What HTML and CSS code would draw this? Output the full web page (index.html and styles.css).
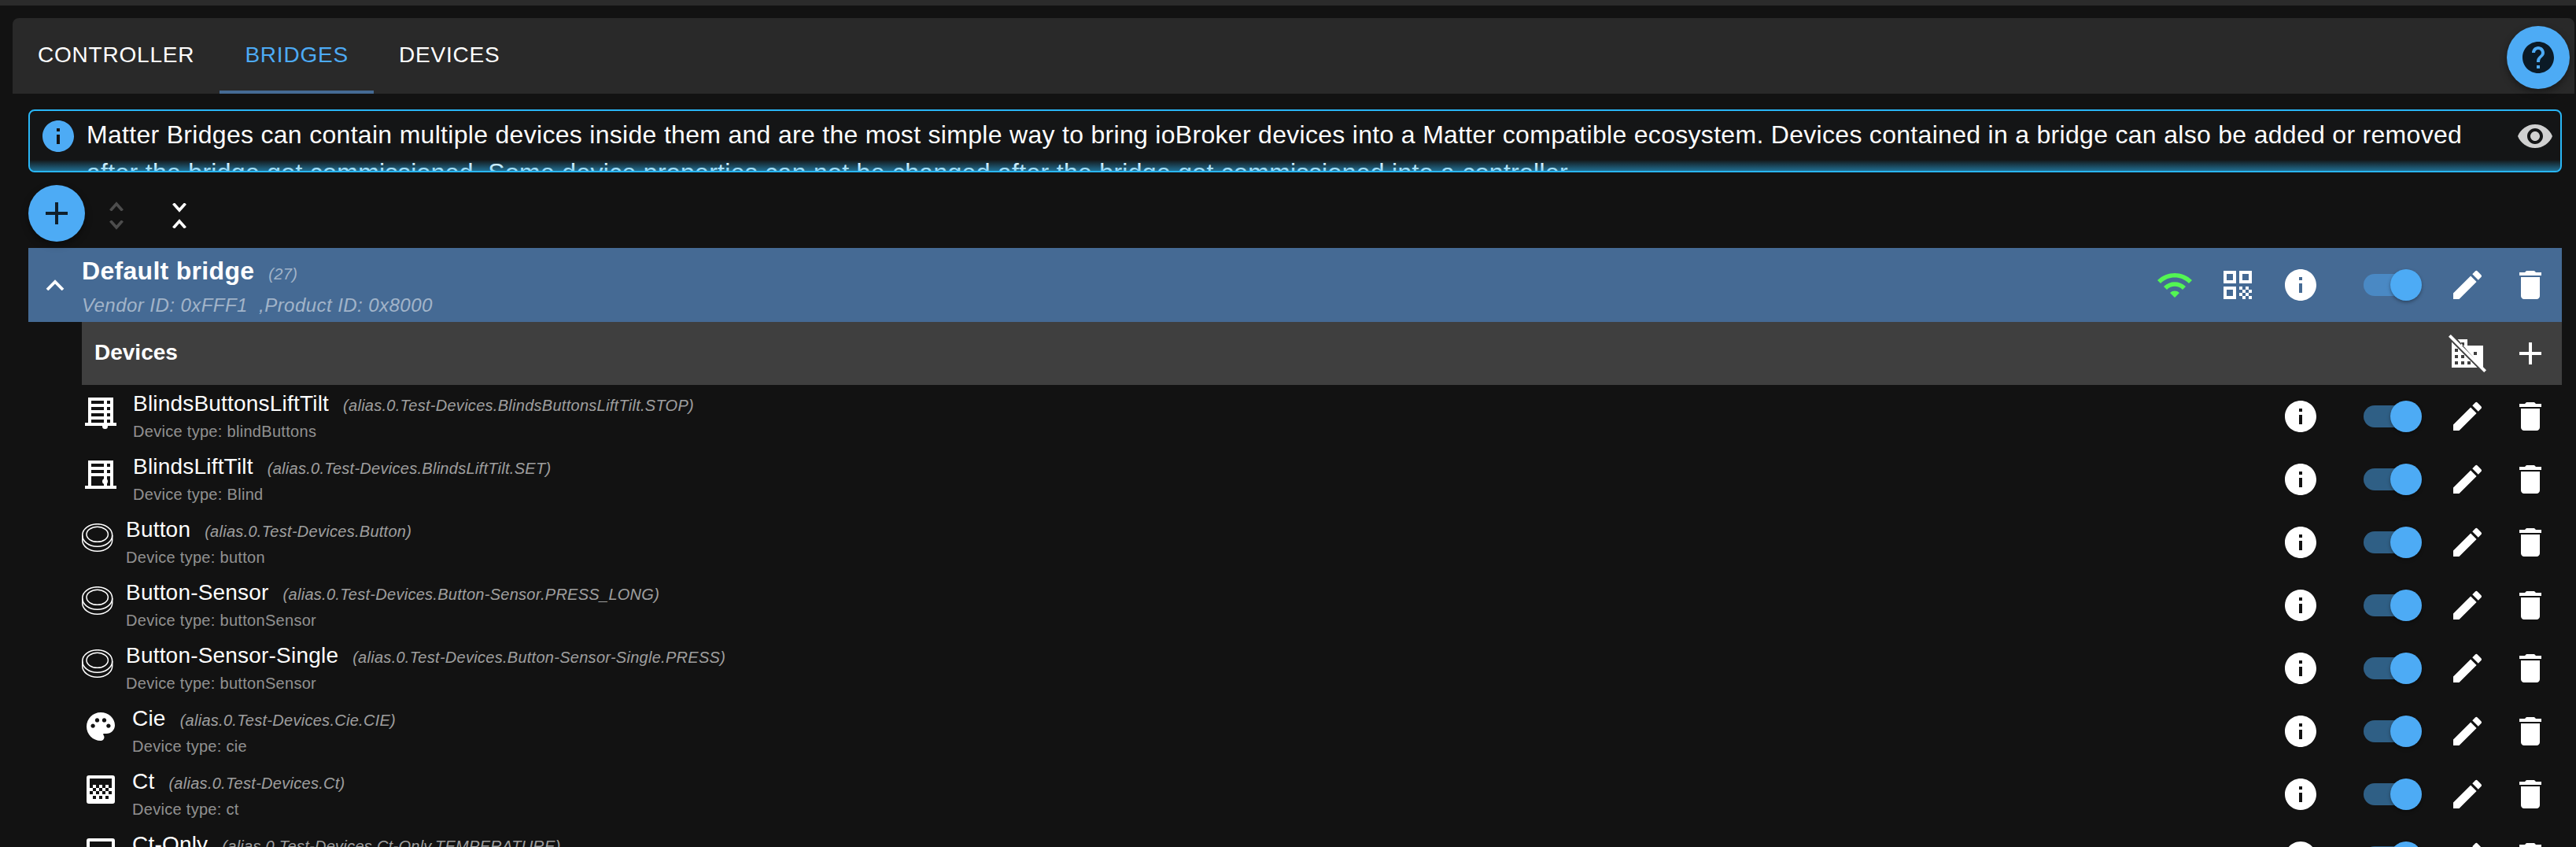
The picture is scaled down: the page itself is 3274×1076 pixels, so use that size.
FILE: index.html
```html
<!DOCTYPE html>
<html lang="en">
<head>
    <meta charset="UTF-8">
    <title>Matter bridges</title>
    <link rel="stylesheet" href="styles.css">
</head>
<body>
    <svg class="sprite" xmlns="http://www.w3.org/2000/svg">
        <symbol id="i-info" viewBox="0 0 24 24"><path d="M12 2C6.48 2 2 6.48 2 12s4.48 10 10 10 10-4.48 10-10S17.52 2 12 2zm1 15h-2v-6h2v6zm0-8h-2V7h2v2z"/></symbol>
        <symbol id="i-edit" viewBox="0 0 24 24"><path d="M3 17.25V21h3.75L17.81 9.94l-3.75-3.75L3 17.25zM20.71 7.04c.39-.39.39-1.02 0-1.41l-2.34-2.34a.9959.9959 0 0 0-1.41 0l-1.83 1.83 3.75 3.75 1.83-1.83z"/></symbol>
        <symbol id="i-delete" viewBox="0 0 24 24"><path d="M6 19c0 1.1.9 2 2 2h8c1.1 0 2-.9 2-2V7H6v12zM19 4h-3.5l-1-1h-5l-1 1H5v2h14V4z"/></symbol>
        <symbol id="i-add" viewBox="0 0 24 24"><path d="M19 13h-6v6h-2v-6H5v-2h6V5h2v6h6v2z"/></symbol>
        <symbol id="i-wifi" viewBox="0 0 24 24"><path d="M1 9l2 2c4.97-4.97 13.03-4.97 18 0l2-2C16.93 2.93 7.08 2.93 1 9zm8 8l3 3 3-3c-1.65-1.66-4.34-1.66-6 0zm-4-4l2 2c2.76-2.76 7.24-2.76 10 0l2-2C15.14 9.14 8.87 9.14 5 13z"/></symbol>
        <symbol id="i-qr" viewBox="0 0 24 24"><path d="M3 11h8V3H3v8zm2-6h4v4H5V5zM3 21h8v-8H3v8zm2-6h4v4H5v-4zM13 3v8h8V3h-8zm6 6h-4V5h4v4zM21 19h-2v2h2v-2zM15 13h-2v2h2v-2zM17 15h-2v2h2v-2zM15 17h-2v2h2v-2zM17 19h-2v2h2v-2zM19 17h-2v2h2v-2zM19 13h-2v2h2v-2zM21 15h-2v2h2v-2z"/></symbol>
        <symbol id="i-eye" viewBox="0 0 24 24"><path d="M12 4.5C7 4.5 2.73 7.61 1 12c1.73 4.39 6 7.5 11 7.5s9.27-3.11 11-7.5c-1.73-4.39-6-7.5-11-7.5zM12 17c-2.76 0-5-2.24-5-5s2.24-5 5-5 5 2.24 5 5-2.24 5-5 5zm0-8c-1.66 0-3 1.34-3 3s1.34 3 3 3 3-1.34 3-3-1.34-3-3-3z"/></symbol>
        <symbol id="i-help" viewBox="0 0 24 24"><path d="M12 2C6.48 2 2 6.48 2 12s4.48 10 10 10 10-4.48 10-10S17.52 2 12 2zm1 17h-2v-2h2v2zm2.07-7.75-.9.92C13.45 12.9 13 13.5 13 15h-2v-.5c0-1.1.45-2.1 1.17-2.83l1.24-1.26c.37-.36.59-.86.59-1.41 0-1.1-.9-2-2-2s-2 .9-2 2H8c0-2.21 1.79-4 4-4s4 1.79 4 4c0 .88-.36 1.68-.93 2.25z"/></symbol>
        <symbol id="i-no-domain" viewBox="0 0 24 24"><path d="M1.400 0 24 22.600 22.600 24 0 1.400z"/><path fill-rule="evenodd" d="M2 4.700V21h16.300zM4 9h2v2H4zm0 4h2v2H4zm0 4h2v2H4zm4-4h2v2H8zm0 4h2v2H8zm4 0h2v2h-2z"/><path fill-rule="evenodd" d="M5.800 3H12v4h10v14.700zM8 5v2h2V5zm8 6v2h2v-2z"/></symbol>
        <symbol id="i-palette" viewBox="2 2 20 20"><path d="M12 2C6.49 2 2 6.49 2 12s4.49 10 10 10c1.38 0 2.5-1.12 2.5-2.5 0-.61-.23-1.2-.64-1.67-.08-.1-.13-.21-.13-.33 0-.28.22-.5.5-.5H16c3.31 0 6-2.69 6-6 0-4.96-4.49-9-10-9zm5.5 11c-.83 0-1.5-.67-1.5-1.5s.67-1.5 1.5-1.5 1.5.67 1.5 1.5-.67 1.5-1.5 1.5zm-3-4c-.83 0-1.5-.67-1.5-1.5S13.67 6 14.5 6s1.5.67 1.5 1.5S15.33 9 14.5 9zM5 11.5c0-.83.67-1.5 1.5-1.5s1.5.67 1.5 1.5S7.33 13 6.5 13 5 12.33 5 11.5zm6-4c0 .83-.67 1.5-1.5 1.5S8 8.33 8 7.5 8.67 6 9.5 6s1.5.67 1.5 1.5z"/></symbol>
        <symbol id="i-blind-full" viewBox="0 0 40 40"><path fill-rule="evenodd" d="M4 0h32v32h4v4H0v-4h4zM8 4v4h16V4zm20 0v4h4V4zM8 12v4h16v-4zm20 0v4h4v-4zM8 20v4h16v-4zm20 0v4h4v-4zM8 28v4h16v-4zm20 0v4h4v-4z"/><circle cx="25.500" cy="36.500" r="3.500"/></symbol>
        <symbol id="i-blind-half" viewBox="0 0 40 40"><path fill-rule="evenodd" d="M4 0h32v32h4v4H0v-4h4zM8 4v4h16V4zm20 0v4h4V4zM8 12v4h16v-4zm20 0v4h4v-4zM8 20v12h16V20zm20 0v12h4V20z"/><circle cx="25.500" cy="26.500" r="3.500"/></symbol>
        <symbol id="i-button" viewBox="0 0 40 36"><g fill="none" stroke="#fff" stroke-width="1.500"><ellipse cx="19.700" cy="15" rx="19" ry="14.300"/><ellipse cx="19.700" cy="13.800" rx="13.700" ry="9.500"/><path d="M.7 15v6c0 8 8.500 14.200 19 14.200s19-6.200 19-14.200v-6"/></g></symbol>
        <symbol id="i-ct" viewBox="0 0 36 36"><path fill-rule="evenodd" d="M3 0h30a3 3 0 0 1 3 3v30a3 3 0 0 1-3 3H3a3 3 0 0 1-3-3V3a3 3 0 0 1 3-3zm1 4v8h28V4zm0 8v4h4v-4zm8 0v4h4v-4zm8 0v4h4v-4zm8 0v4h4v-4zM8 16v4h4v-4zm8 0v4h4v-4zm8 0v4h4v-4zM4 20v4h4v-4zm8 0v4h4v-4zm8 0v4h4v-4zm8 0v4h4v-4zM8 26v4h4v-4zm8 0v4h4v-4zm8 0v4h4v-4z"/></symbol>
        <symbol id="i-ct-only" viewBox="0 0 36 36"><path fill-rule="evenodd" d="M3 0h30a3 3 0 0 1 3 3v30a3 3 0 0 1-3 3H3a3 3 0 0 1-3-3V3a3 3 0 0 1 3-3zm1 4v28h28V4z"/></symbol>
    </svg>

    <div class="top-strip"></div>

    <div class="tabs">
        <div class="tab">CONTROLLER</div>
        <div class="tab tab-active">BRIDGES</div>
        <div class="tab">DEVICES</div>
    </div>

    <div class="help-fab"><svg class="icon"><use href="#i-help"/></svg></div>

    <div class="alert">
        <svg class="icon alert-icon"><use href="#i-info"/></svg>
        <div class="alert-text">Matter Bridges can contain multiple devices inside them and are the most simple way to bring ioBroker devices into a Matter compatible ecosystem. Devices contained in a bridge can also be added or removed after the bridge got commissioned. Some device properties can not be changed after the bridge got commissioned into a controller</div>
        <svg class="icon alert-eye"><use href="#i-eye"/></svg>
    </div>

    <div class="toolbar">
        <div class="add-fab"><svg class="icon"><use href="#i-add"/></svg></div>
        <div class="fold-btn fold-disabled">
            <svg class="chev" viewBox="0 0 18 12"><path d="M1.400 11.500 9 3l7.600 8.500"/></svg>
            <svg class="chev" viewBox="0 0 18 12"><path d="M1.400.5 9 9l7.600-8.500"/></svg>
        </div>
        <div class="fold-btn fold-close">
            <svg class="chev" viewBox="0 0 18 12"><path d="M1.400.5 9 9l7.600-8.500"/></svg>
            <svg class="chev" viewBox="0 0 18 12"><path d="M1.400 11.500 9 3l7.600 8.500"/></svg>
        </div>
    </div>

    <div class="bridge">
        <svg class="bridge-chev" viewBox="0 0 24 14"><path d="M2 13 12 3l10 10"/></svg>
        <div class="bridge-info">
            <div class="bridge-title">Default bridge<span class="bridge-count">(27)</span></div>
            <div class="bridge-sub">Vendor ID: 0xFFF1 &nbsp;,Product ID: 0x8000</div>
        </div>
        <div class="actions">
            <svg class="icon icon-wifi"><use href="#i-wifi"/></svg>
            <svg class="icon"><use href="#i-qr"/></svg>
            <svg class="icon"><use href="#i-info"/></svg>
            <div class="switch switch-bridge"></div>
            <svg class="icon"><use href="#i-edit"/></svg>
            <svg class="icon"><use href="#i-delete"/></svg>
        </div>
    </div>

    <div class="devices">
        <div class="devices-head">
            <div class="devices-title">Devices</div>
            <svg class="icon head-icon"><use href="#i-no-domain"/></svg>
            <svg class="icon head-icon"><use href="#i-add"/></svg>
        </div>

        <div class="row">
            <div class="dev-icon dev-wide"><svg class="blind"><use href="#i-blind-full"/></svg></div>
            <div class="dev-text">
                <div class="dev-name">BlindsButtonsLiftTilt<span class="dev-alias">(alias.0.Test-Devices.BlindsButtonsLiftTilt.STOP)</span></div>
                <div class="dev-type">Device type: blindButtons</div>
            </div>
            <div class="actions">
                <svg class="icon"><use href="#i-info"/></svg>
                <div class="switch"></div>
                <svg class="icon"><use href="#i-edit"/></svg>
                <svg class="icon"><use href="#i-delete"/></svg>
            </div>
        </div>

        <div class="row">
            <div class="dev-icon dev-wide"><svg class="blind"><use href="#i-blind-half"/></svg></div>
            <div class="dev-text">
                <div class="dev-name">BlindsLiftTilt<span class="dev-alias">(alias.0.Test-Devices.BlindsLiftTilt.SET)</span></div>
                <div class="dev-type">Device type: Blind</div>
            </div>
            <div class="actions">
                <svg class="icon"><use href="#i-info"/></svg>
                <div class="switch"></div>
                <svg class="icon"><use href="#i-edit"/></svg>
                <svg class="icon"><use href="#i-delete"/></svg>
            </div>
        </div>

        <div class="row">
            <div class="dev-icon dev-narrow"><svg class="btn-icon"><use href="#i-button"/></svg></div>
            <div class="dev-text">
                <div class="dev-name">Button<span class="dev-alias">(alias.0.Test-Devices.Button)</span></div>
                <div class="dev-type">Device type: button</div>
            </div>
            <div class="actions">
                <svg class="icon"><use href="#i-info"/></svg>
                <div class="switch"></div>
                <svg class="icon"><use href="#i-edit"/></svg>
                <svg class="icon"><use href="#i-delete"/></svg>
            </div>
        </div>

        <div class="row">
            <div class="dev-icon dev-narrow"><svg class="btn-icon"><use href="#i-button"/></svg></div>
            <div class="dev-text">
                <div class="dev-name">Button-Sensor<span class="dev-alias">(alias.0.Test-Devices.Button-Sensor.PRESS_LONG)</span></div>
                <div class="dev-type">Device type: buttonSensor</div>
            </div>
            <div class="actions">
                <svg class="icon"><use href="#i-info"/></svg>
                <div class="switch"></div>
                <svg class="icon"><use href="#i-edit"/></svg>
                <svg class="icon"><use href="#i-delete"/></svg>
            </div>
        </div>

        <div class="row">
            <div class="dev-icon dev-narrow"><svg class="btn-icon"><use href="#i-button"/></svg></div>
            <div class="dev-text">
                <div class="dev-name">Button-Sensor-Single<span class="dev-alias">(alias.0.Test-Devices.Button-Sensor-Single.PRESS)</span></div>
                <div class="dev-type">Device type: buttonSensor</div>
            </div>
            <div class="actions">
                <svg class="icon"><use href="#i-info"/></svg>
                <div class="switch"></div>
                <svg class="icon"><use href="#i-edit"/></svg>
                <svg class="icon"><use href="#i-delete"/></svg>
            </div>
        </div>

        <div class="row">
            <div class="dev-icon dev-mid"><svg class="square"><use href="#i-palette"/></svg></div>
            <div class="dev-text">
                <div class="dev-name">Cie<span class="dev-alias">(alias.0.Test-Devices.Cie.CIE)</span></div>
                <div class="dev-type">Device type: cie</div>
            </div>
            <div class="actions">
                <svg class="icon"><use href="#i-info"/></svg>
                <div class="switch"></div>
                <svg class="icon"><use href="#i-edit"/></svg>
                <svg class="icon"><use href="#i-delete"/></svg>
            </div>
        </div>

        <div class="row">
            <div class="dev-icon dev-mid"><svg class="square"><use href="#i-ct"/></svg></div>
            <div class="dev-text">
                <div class="dev-name">Ct<span class="dev-alias">(alias.0.Test-Devices.Ct)</span></div>
                <div class="dev-type">Device type: ct</div>
            </div>
            <div class="actions">
                <svg class="icon"><use href="#i-info"/></svg>
                <div class="switch"></div>
                <svg class="icon"><use href="#i-edit"/></svg>
                <svg class="icon"><use href="#i-delete"/></svg>
            </div>
        </div>

        <div class="row">
            <div class="dev-icon dev-mid"><svg class="square"><use href="#i-ct-only"/></svg></div>
            <div class="dev-text">
                <div class="dev-name">Ct-Only<span class="dev-alias">(alias.0.Test-Devices.Ct-Only.TEMPERATURE)</span></div>
                <div class="dev-type">Device type: ct</div>
            </div>
            <div class="actions">
                <svg class="icon"><use href="#i-info"/></svg>
                <div class="switch"></div>
                <svg class="icon"><use href="#i-edit"/></svg>
                <svg class="icon"><use href="#i-delete"/></svg>
            </div>
        </div>
    </div>
</body>
</html>
```

FILE: styles.css
```css
html, body {
    height: 1076px;
    overflow: hidden;
}
body {
    position: relative;
    margin: 0;
    background: #121212;
    color: #fff;
    font-family: "Liberation Sans", Arial, sans-serif;
}
.sprite {
    display: none;
}
.icon {
    display: block;
    flex: none;
    width: 48px;
    height: 48px;
    fill: #fff;
}
.top-strip {
    height: 7px;
    background: #2b2b2b;
}

/* tabs */
.tabs {
    display: flex;
    height: 96px;
    margin: 16px 2px 0 16px;
    background: #292929;
    border-radius: 8px 8px 0 0;
}
.tab {
    box-sizing: border-box;
    height: 96px;
    padding: 0 32px;
    font-size: 28px;
    letter-spacing: 0.8px;
    line-height: 94px;
}
.tab-active {
    color: #4dabf5;
    border-bottom: 4px solid #456a94;
}
.help-fab {
    position: absolute;
    top: 33px;
    left: 3186px;
    display: flex;
    align-items: center;
    justify-content: center;
    width: 80px;
    height: 80px;
    border-radius: 50%;
    background: #4dabf5;
    box-shadow: 0 4px 10px rgba(0, 0, 0, 0.4);
}
.help-fab .icon {
    fill: #0b1a26;
}

/* info box */
.alert {
    position: relative;
    box-sizing: border-box;
    display: flex;
    width: 3220px;
    height: 80px;
    margin: 20px 0 0 36px;
    padding: 0 8px 0 12px;
    border: 2px solid #29b6f6;
    border-radius: 8px;
    background: #141516;
    overflow: hidden;
}
.alert::after {
    content: "";
    position: absolute;
    left: 0;
    right: 0;
    bottom: 0;
    height: 14px;
    background: linear-gradient(rgba(41, 182, 246, 0), rgba(41, 182, 246, 0.55));
}
.alert-icon {
    margin-top: 8px;
    fill: #4dabf5;
}
.alert-text {
    flex: 1;
    margin-left: 12px;
    padding-top: 6px;
    padding-right: 28px;
    font-size: 32px;
    letter-spacing: 0.3px;
    line-height: 48px;
}
.alert-eye {
    margin-top: 8px;
    fill: #d0d0d0;
}

/* add and fold buttons */
.toolbar {
    display: flex;
    align-items: center;
    height: 72px;
    margin: 16px 0 8px 36px;
}
.add-fab {
    display: flex;
    align-items: center;
    justify-content: center;
    width: 72px;
    height: 72px;
    border-radius: 50%;
    background: #4dabf5;
    box-shadow: 0 4px 10px rgba(0, 0, 0, 0.4);
}
.add-fab .icon {
    fill: #10202c;
}
.fold-btn {
    display: flex;
    flex-direction: column;
    align-items: center;
    width: 18px;
    margin-top: 6px;
}
.fold-disabled {
    gap: 12px;
    margin-left: 31px;
    stroke: #4d4d4d;
}
.fold-close {
    gap: 8px;
    margin-left: 62px;
    stroke: #fff;
}
.chev {
    width: 18px;
    height: 12px;
    fill: none;
    stroke: inherit;
    stroke-width: 3.6;
}

/* bridge row */
.bridge {
    display: flex;
    align-items: center;
    box-sizing: border-box;
    width: 3220px;
    height: 94px;
    margin-left: 36px;
    padding-right: 16px;
    background: #456a94;
}
.bridge-chev {
    flex: none;
    width: 24px;
    height: 14px;
    margin: 0 22px 0 22px;
    fill: none;
    stroke: #fff;
    stroke-width: 3.8;
}
.bridge-info {
    flex: 1;
    align-self: flex-start;
}
.bridge-title {
    height: 46px;
    padding-top: 6px;
    font-size: 32px;
    font-weight: bold;
    letter-spacing: 0.3px;
    line-height: 46px;
}
.bridge-count {
    margin-left: 18px;
    font-size: 20px;
    font-weight: normal;
    font-style: italic;
    color: rgba(255, 255, 255, 0.5);
}
.bridge-sub {
    margin-top: -1px;
    font-size: 24px;
    letter-spacing: 0.45px;
    line-height: 44px;
    font-style: italic;
    color: rgba(255, 255, 255, 0.5);
}
.actions {
    display: flex;
    align-items: center;
    justify-content: flex-end;
    gap: 32px;
}
.icon-wifi {
    fill: #53f653;
}

/* switch */
.switch {
    position: relative;
    flex: none;
    width: 62px;
    height: 28px;
    margin: 0 14px 0 24px;
    border-radius: 14px;
    background: #2f5f85;
}
.switch::after {
    content: "";
    position: absolute;
    top: -6px;
    right: -12px;
    width: 40px;
    height: 40px;
    border-radius: 50%;
    background: #4dabf5;
    box-shadow: 0 2px 4px rgba(0, 0, 0, 0.35);
}
.switch-bridge {
    background: #4a89c4;
}

/* devices */
.devices {
    width: 3152px;
    margin-left: 104px;
}
.devices-head {
    display: flex;
    align-items: center;
    gap: 32px;
    box-sizing: border-box;
    height: 80px;
    padding: 0 16px;
    background: #3f3f3f;
}
.devices-title {
    flex: 1;
    margin-top: -2px;
    font-size: 28px;
    font-weight: bold;
}
.row {
    display: flex;
    align-items: center;
    box-sizing: border-box;
    height: 80px;
    padding-right: 16px;
}
.dev-icon {
    align-self: flex-start;
    flex: none;
    display: flex;
    padding-top: 16px;
}
.dev-icon svg {
    display: block;
    fill: #fff;
}
.dev-wide {
    width: 65px;
    padding-left: 4px;
    box-sizing: border-box;
}
.dev-narrow {
    width: 56px;
}
.dev-mid {
    width: 64px;
    padding-left: 6px;
    box-sizing: border-box;
}
.blind {
    width: 40px;
    height: 40px;
}
.btn-icon {
    width: 40px;
    height: 36px;
}
.square {
    width: 36px;
    height: 36px;
}
.dev-text {
    flex: 1;
    align-self: flex-start;
}
.dev-name {
    height: 40px;
    padding-top: 7px;
    font-size: 28px;
    letter-spacing: 0.2px;
    line-height: 34px;
    box-sizing: border-box;
}
.dev-alias {
    margin-left: 18px;
    font-size: 20px;
    letter-spacing: 0.28px;
    font-style: italic;
    color: rgba(255, 255, 255, 0.6);
}
.dev-type {
    margin-top: 7px;
    font-size: 20px;
    letter-spacing: 0.3px;
    line-height: 24px;
    color: rgba(255, 255, 255, 0.55);
}
```
